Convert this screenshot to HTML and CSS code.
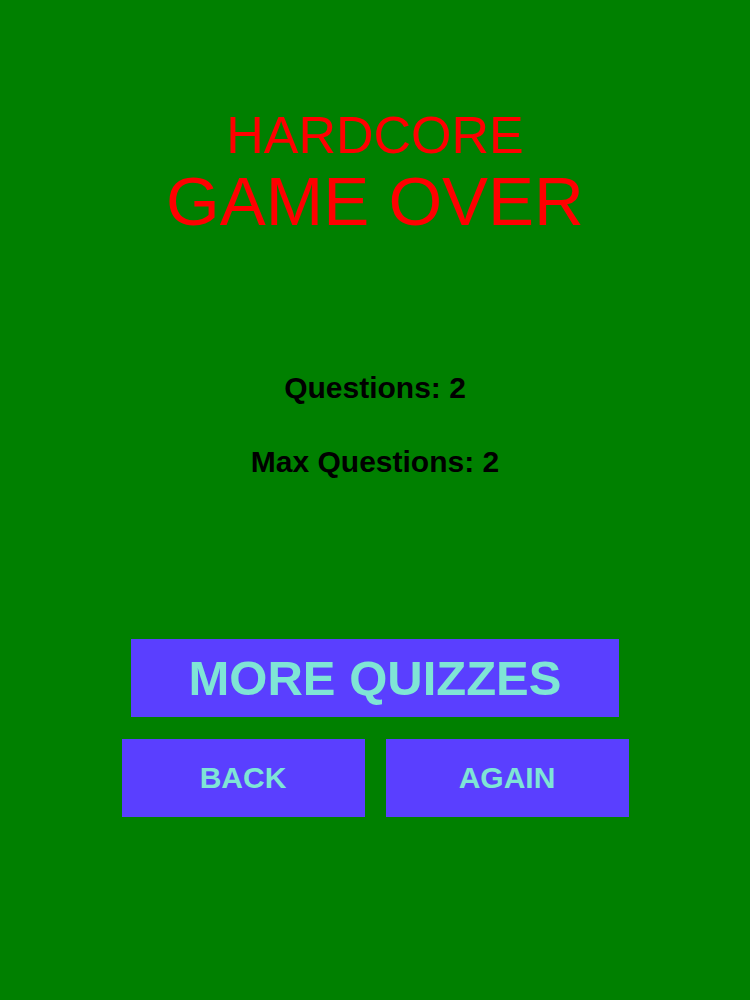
FILE: index.html
```html
<!DOCTYPE html>
<html lang="en">
<head>
  <meta charset="UTF-8">
  <meta name="viewport" content="width=device-width, initial-scale=1.0">
  <title>Game Over</title>
  <link rel="stylesheet" href="styles.css">
</head>
<body>
  <div class="screen">
    <div class="title">
      <h2 class="mode">HARDCORE</h2>
      <h1 class="game-over">GAME OVER</h1>
    </div>

    <div class="stats">
      <p class="stat">Questions: 2</p>
      <p class="stat">Max Questions: 2</p>
    </div>

    <div class="actions">
      <button class="btn btn-wide">MORE QUIZZES</button>
      <div class="btn-row">
        <button class="btn btn-small">BACK</button>
        <button class="btn btn-small">AGAIN</button>
      </div>
    </div>
  </div>
</body>
</html>
```

FILE: styles.css
```css
* {
  margin: 0;
  padding: 0;
  box-sizing: border-box;
  font-family: 'Liberation Sans', Arial, Helvetica, sans-serif;
}

body {
  background-color: #008000;
  width: 750px;
  height: 1000px;
  overflow: hidden;
}

.screen {
  display: flex;
  flex-direction: column;
  align-items: center;
  padding-top: 109px;
}

.title {
  display: flex;
  flex-direction: column;
  align-items: center;
  color: #ff0000;
  font-weight: normal;
}

.mode {
  font-size: 52px;
  line-height: 1;
  font-weight: normal;
}

.game-over {
  font-size: 69px;
  line-height: 1;
  font-weight: normal;
  margin-top: 6px;
}

.stats {
  display: flex;
  flex-direction: column;
  align-items: center;
  gap: 44px;
  margin-top: 137px;
}

.stat {
  font-size: 30px;
  line-height: 1;
  font-weight: bold;
  color: #000;
}

.actions {
  display: flex;
  flex-direction: column;
  align-items: center;
  gap: 22px;
  margin-top: 162px;
}

.btn {
  display: flex;
  align-items: center;
  justify-content: center;
  background-color: #5a3fff;
  color: #7fe5d5;
  border: none;
  font-weight: bold;
  line-height: 1;
  height: 78px;
  cursor: pointer;
}

.btn-wide {
  width: 488px;
  font-size: 49px;
}

.btn-row {
  display: flex;
  gap: 21px;
}

.btn-small {
  width: 243px;
  font-size: 30px;
}
```
